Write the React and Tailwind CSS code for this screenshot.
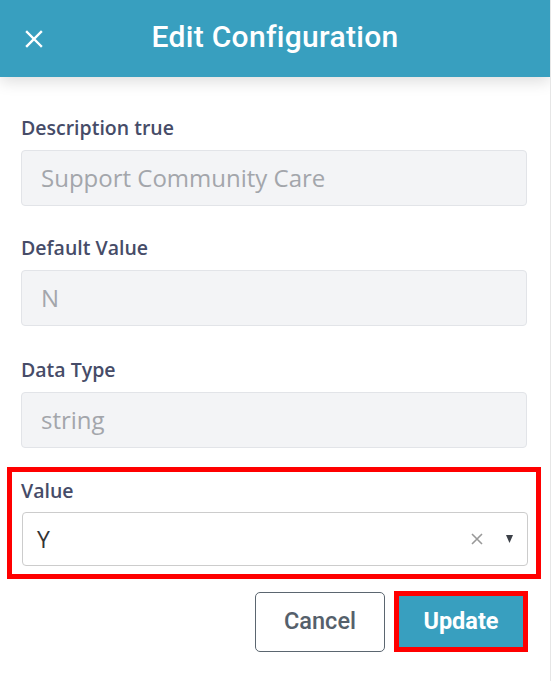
import React from 'react';

const Field = ({ label, value, className = '' }) => (
  <div className={className}>
    <label className="block h-6 text-[19.5px] leading-6 font-semibold text-[#464c68]">{label}</label>
    <div className="mt-[10px] h-[56px] flex items-center px-[19px] bg-[#f3f4f6] border border-[#e2e4e8] rounded-[4px] text-[24px] text-[#a3a6ab]">
      {value}
    </div>
  </div>
);

export default function App() {
  return (
    <div className="w-[551px] h-[681px] bg-white border-r border-[#e6e6e6] overflow-hidden font-['Open_Sans',sans-serif]">
      <header className="relative z-10 h-[77px] bg-[#389fbf] grid grid-cols-[68px_1fr_68px] items-center shadow-[0_5px_14px_rgba(0,0,0,0.13)]">
        <button className="pl-[25px] flex items-center text-white">
          <svg width="18" height="18" viewBox="0 0 18 18" fill="none" stroke="currentColor" strokeWidth="2.4" strokeLinecap="square">
            <path d="M2 2L16 16M16 2L2 16" />
          </svg>
        </button>
        <h1 className="pb-[3px] text-center text-white text-[30px] leading-9 font-medium font-['Roboto',sans-serif] tracking-[0.3px]">
          Edit Configuration
        </h1>
        <div />
      </header>

      <div className="pl-[21px] pr-[23px] pt-[39px]">
        <Field label="Description true" value="Support Community Care" />
        <Field label="Default Value" value="N" className="mt-[30px]" />
        <Field label="Data Type" value="string" className="mt-[32px]" />

        <div className="-mx-[14px] mt-[19px] border-[5px] border-[#ff0000] pl-[10px] pr-[8px] pt-[7px] pb-[8px]">
          <label className="block h-6 -ml-px text-[19.5px] leading-6 font-semibold text-[#464c68]">Value</label>
          <div className="mt-[9px] h-[54px] flex items-center pl-[14px] pr-[14px] border border-[#cccccc] rounded-[4px]">
            <span className="flex-1 text-[23px] text-[#333333]">Y</span>
            <svg width="12" height="12" viewBox="0 0 12 12" fill="none" stroke="#999999" strokeWidth="1.6">
              <path d="M1 1L11 11M11 1L1 11" />
            </svg>
            <svg className="ml-[23px]" width="7" height="8" viewBox="0 0 7 8" fill="#3c4148">
              <path d="M0 0H7L3.5 8Z" />
            </svg>
          </div>
        </div>

        <div className="mt-[12px] -mr-px flex justify-end items-start gap-[9px] font-['Roboto',sans-serif]">
          <button className="w-[130px] h-[60px] mt-px border border-[#5b6670] rounded-[5px] bg-white text-[23.5px] font-medium text-[#55606b]">
            Cancel
          </button>
          <button className="w-[134px] h-[61px] border-[5px] border-[#ff0000] bg-[#389fbf] text-[23.5px] font-bold text-white">
            Update
          </button>
        </div>
      </div>
    </div>
  );
}
